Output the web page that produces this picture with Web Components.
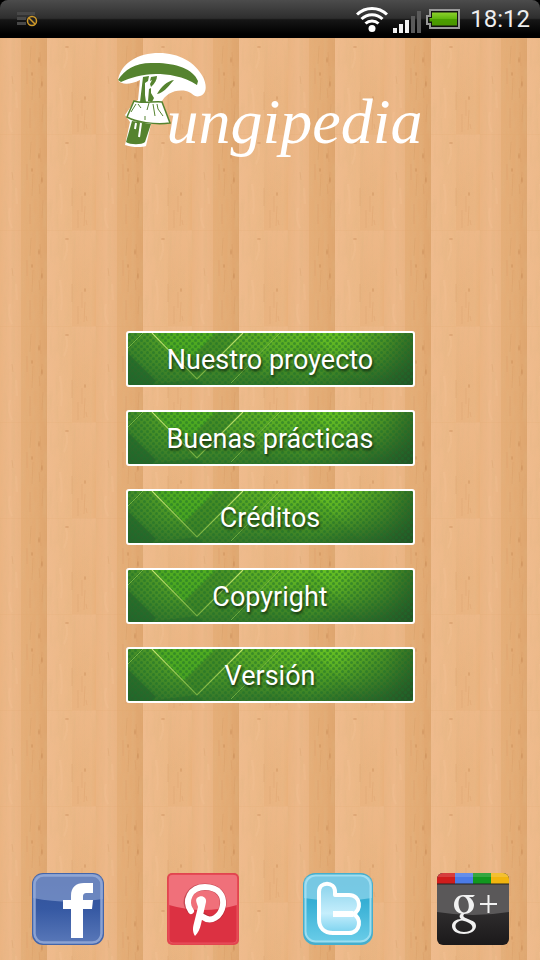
<!DOCTYPE html>
<html lang="es">
<head>
<meta charset="utf-8">
<meta name="viewport" content="width=device-width, initial-scale=1">
<title>Fungipedia</title>
<style>
	body {
		margin: 0;
		background: #000;
		font-family: Roboto, "Noto Sans", sans-serif;
		color: #fff;
	}
</style>
</head>
<body>
<fungi-app>
	<status-bar slot="status" time="18:12"></status-bar>
	<fungi-logo slot="logo">ungipedia</fungi-logo>
	<menu-button>Nuestro proyecto</menu-button>
	<menu-button>Buenas prácticas</menu-button>
	<menu-button>Créditos</menu-button>
	<menu-button>Copyright</menu-button>
	<menu-button>Versión</menu-button>
	<social-link slot="social" network="facebook" label="Facebook"></social-link>
	<social-link slot="social" network="pinterest" label="Pinterest"></social-link>
	<social-link slot="social" network="twitter" label="Twitter"></social-link>
	<social-link slot="social" network="google" label="Google Plus"></social-link>
</fungi-app>

<script>
// turn svg markup into a css background
const svgUrl = (svg) => `url("data:image/svg+xml,${encodeURIComponent(svg)}")`;

// one wood tile, repeated over the whole screen
const wood = svgUrl(`
<svg xmlns="http://www.w3.org/2000/svg" width="96" height="96">
	<defs>
		<linearGradient id="a"><stop offset="0" stop-color="#ebb482"/><stop offset=".5" stop-color="#edb889"/><stop offset="1" stop-color="#eab483"/></linearGradient>
		<linearGradient id="b"><stop offset="0" stop-color="#e5ae78"/><stop offset=".6" stop-color="#e3aa73"/><stop offset="1" stop-color="#dea56e"/></linearGradient>
		<linearGradient id="c"><stop offset="0" stop-color="#efbb8d"/><stop offset="1" stop-color="#ecb886"/></linearGradient>
		<linearGradient id="d"><stop offset="0" stop-color="#e9b380"/><stop offset=".8" stop-color="#ebb582"/><stop offset="1" stop-color="#e9b17b"/></linearGradient>
		<linearGradient id="e" x2="0" y2="1"><stop offset="0" stop-color="#edb888"/><stop offset="1" stop-color="#edb888" stop-opacity="0"/></linearGradient>
		<filter id="n" x="0" y="0" width="1" height="1">
			<feTurbulence type="fractalNoise" baseFrequency=".25 .03" numOctaves="3" seed="4" stitchTiles="stitch"/>
			<feColorMatrix values="0 0 0 0 .74  0 0 0 0 .46  0 0 0 0 .22  1.600 0 0 0 -.640"/>
		</filter>
	</defs>
	<rect width="21" height="96" fill="url(#a)"/>
	<rect x="21" width="26" height="96" fill="url(#b)"/>
	<rect x="47" width="25" height="96" fill="url(#c)"/>
	<rect x="72" width="24" height="96" fill="url(#d)"/>
	<rect x="72" width="24" height="60" fill="url(#e)"/>
	<rect width="96" height="96" filter="url(#n)" opacity=".5"/>
	<g fill="none" stroke="#c98a52" stroke-width="1" opacity=".2">
		<path d="M12 38l1 8M31 8l-1 18M33 40l-1 22M30 70v20M40 14l1 14M39 50l1 10M42 38l-1 12M43 66l-1 18M27 30v16"/>
		<path d="M72 54v18M78 76v18M82 62v16M85 72l-1 20M86 86l1 5"/>
	</g>
	<g fill="#b97a45" opacity=".3">
		<ellipse cx="39" cy="22" rx="1" ry="3"/><ellipse cx="42" cy="46" rx="1" ry="3"/><ellipse cx="32" cy="36" rx="1" ry="2"/><ellipse cx="67" cy="9" rx="2" ry="1"/><ellipse cx="85" cy="60" rx="1" ry="2"/>
	</g>
	<g fill="none" stroke="#f3c497" stroke-width="2" opacity=".25">
		<path d="M10 74q-3 10 2 20M16 54l1 16M66 10q3 10-2 20M60 50q3 18 1 30"/>
	</g>
	<path d="M0 0h96" stroke="#dda06a" opacity=".3"/>
</svg>`);

// green artwork behind each menu button
const leaf = svgUrl(`
<svg xmlns="http://www.w3.org/2000/svg" viewBox="0 0 285 52" preserveAspectRatio="none">
	<defs>
		<linearGradient id="g" x2="0" y2="1"><stop offset="0" stop-color="#5aa824"/><stop offset=".5" stop-color="#4a9426"/><stop offset="1" stop-color="#357629"/></linearGradient>
		<radialGradient id="r" cx="196" cy="-6" r="110" gradientUnits="userSpaceOnUse" gradientTransform="matrix(1 0 0 .55 0 0)"><stop offset="0" stop-color="#66c222"/><stop offset="1" stop-color="#5cad24" stop-opacity="0"/></radialGradient>
		<linearGradient id="l"><stop offset="0" stop-color="#1d5a2c" stop-opacity=".4"/><stop offset=".15" stop-color="#1d5a2c" stop-opacity="0"/><stop offset=".9" stop-color="#1d4a25" stop-opacity="0"/><stop offset="1" stop-color="#1d4a25" stop-opacity=".3"/></linearGradient>
		<linearGradient id="k" gradientUnits="userSpaceOnUse" x1="220" y1="0" x2="285" y2="52"><stop offset="0" stop-color="#1d4a25" stop-opacity="0"/><stop offset="1" stop-color="#1d4a25" stop-opacity=".7"/></linearGradient>
		<pattern id="p" width="6" height="6" patternUnits="userSpaceOnUse"><circle cx="1.500" cy="1.500" r="1.500" fill="#1a6e2b"/><circle cx="4.500" cy="4.500" r="1.500" fill="#1a6e2b"/></pattern>
		<linearGradient id="s" x2="0" y2="1"><stop offset="0" stop-color="#c4e66e"/><stop offset="1" stop-color="#8fc34a" stop-opacity=".7"/></linearGradient>
	</defs>
	<rect width="285" height="52" fill="url(#g)"/>
	<path d="M0 20L28 48 24 52H0z" fill="#1d5a2a" opacity=".5"/>
	<path d="M24 0h64L56 32z" fill="#46b41d" opacity=".45"/>
	<path d="M88 0h27L69 46 56 32z" fill="#3a7f25" opacity=".6"/>
	<path d="M69 46l6 6H20z" fill="#1d5a2a" opacity=".3"/>
	<rect width="285" height="52" fill="url(#r)"/>
	<path d="M183 0L131 52h104z" fill="#2a6c24" opacity=".15"/>
	<rect width="285" height="52" fill="url(#l)"/>
	<rect width="285" height="52" fill="url(#k)"/>
	<rect width="285" height="52" fill="url(#p)" opacity=".5"/>
	<path d="M24 0l45 46L115 0" fill="none" stroke="url(#s)" stroke-width="1.200"/>
	<path d="M152 0l-49 50M15 0L0 15" fill="none" stroke="#9bd04f" opacity=".6"/>
</svg>`);

// page skeleton: status bar on top, then logo, menu and social links
class FungiApp extends HTMLElement {
	constructor() {
		super();
		this.attachShadow({ mode: 'open' });
		this.shadowRoot.innerHTML = `
		<style>
			:host {
				display: flex;
				flex-direction: column;
				min-height: 100vh;
			}
			main {
				flex: 1;
				display: flex;
				flex-direction: column;
				justify-content: space-between;
				align-items: center;
				padding: 15px 0;
				background: ${wood};
			}
			nav {
				display: grid;
				gap: 23px;
				width: 53%;
				min-width: 289px;
			}
			footer {
				display: flex;
				justify-content: space-around;
				width: 100%;
			}
		</style>
		<slot name="status"></slot>
		<main>
			<slot name="logo"></slot>
			<nav><slot></slot></nav>
			<footer><slot name="social"></slot></footer>
		</main>
		`;
	}
}

class StatusBar extends HTMLElement {
	constructor() {
		super();
		this.attachShadow({ mode: 'open' });
		this.shadowRoot.innerHTML = `
		<style>
			:host {
				display: flex;
				align-items: center;
				box-sizing: border-box;
				height: 38px;
				padding: 0 10px 0 16px;
				border-radius: 8px 8px 0 0;
				background: linear-gradient(#4c4c4c, #2e2e2e 48%, #161616 52%, #000 90%);
			}
			svg { display: block; }
			.icons {
				display: flex;
				align-items: center;
				gap: 5px;
				margin-left: auto;
				padding-right: 10px;
			}
			time {
				font-size: 24px;
				line-height: 38px;
				color: #eee;
			}
		</style>
		<svg width="24" height="18" viewBox="0 0 24 18">
			<path d="M1 3.500h18M1 8.500h9M1 13.500h9" stroke="#484848" stroke-width="3"/>
			<circle cx="16" cy="11" r="4.500" fill="#222" stroke="#d09a28" stroke-width="1.500"/>
			<path d="M13 8l6 6" stroke="#d09a28" stroke-width="1.500"/>
		</svg>
		<div class="icons">
			<svg width="32" height="28" viewBox="0 0 32 28" fill="none" stroke="#fff" stroke-width="3">
				<path d="M1 9.500a21.500 21.500 0 0 1 30 0M5.500 14a15 15 0 0 1 21 0M9.500 18.500a9.500 9.500 0 0 1 13 0"/>
				<circle cx="16" cy="23.500" r="3.500" fill="#fff" stroke="none"/>
			</svg>
			<svg width="28" height="28" viewBox="0 0 28 28" fill="#f2f2f2">
				<path d="M0 23h4v5H0zM6 19h4v9H6zM12 15h4v13h-4z"/>
				<path d="M18 11h4v17h-4zM24 6h4v22h-4z" fill="#5a5a5a"/>
			</svg>
			<svg width="34" height="20" viewBox="0 0 34 20">
				<defs><linearGradient id="b" x2="0" y2="1"><stop offset="0" stop-color="#8bd12c"/><stop offset=".5" stop-color="#5fb40d"/><stop offset=".5" stop-color="#4a9f00"/><stop offset="1" stop-color="#4a9500"/></linearGradient></defs>
				<path d="M4 1h29v18H4v-4H1V7h3z" fill="#111" stroke="#999" stroke-width="2"/>
				<path d="M6 3.500h25v13H6v-4H3.500V9H6z" fill="url(#b)"/>
			</svg>
		</div>
		<time>${this.getAttribute('time')}</time>
		`;
	}
}

// the mushroom stands for the first letter of the name
class FungiLogo extends HTMLElement {
	constructor() {
		super();
		this.attachShadow({ mode: 'open' });
		this.shadowRoot.innerHTML = `
		<style>
			:host { display: block; }
			h1 {
				display: flex;
				margin: 0;
				height: 108px;
				font: italic 64px/64px "Liberation Serif", serif;
			}
			svg {
				flex: none;
				margin-right: -39px;
			}
			span { padding-top: 37px; }
		</style>
		<h1>
			<svg width="88" height="96" viewBox="0 0 88 96" role="img" aria-label="F">
				<path d="M0 27C3 10 20 0 41 0c20 0 36 9 44 24 4 8 4 17-3 19-6 2-8-4-14-5-11-2-21 3-25 12l9 20-19 1-5 22c-5 2-16 1-21-1l5-23-5-7 9-13 4-2 2-20C12 32 3 32 0 27z" fill="#fff"/>
				<g fill="#55832f">
					<path d="M0 27C6 17 17 10 33 10c22-1 42 5 47 18l-1 4C66 23 49 21 38 21 24 21 12 25 3 29z"/>
					<path d="M25 24l6-1-1 5-3 2v12l1 7h-6zM31 36l2-1v5l3 5-2 4-4-1zM33 24l6-1c0 4-2 7-6 11l-1-3 2-4-2 1zM56 27C49 28 43 34 39 41c6-1 10-6 17-14z"/>
					<path d="M14 68l19 3-6 18c-3 3-15 3-19 0z"/>
				</g>
				<path d="M16 48c8 3 20 0 28 1l8 21c-15 2-35-1-43-6z" fill="#fff" stroke="#55832f" stroke-width="1.500"/>
				<path d="M18 51l-5 8M20 51l3 4M31 50l-2 7M39 51l1 5 5 7M35 51l2 12M27 63v4" fill="none" stroke="#55832f"/>
				<path d="M18 70l-1 6M23 70l-2 14" stroke="#fff" stroke-width="2"/>
			</svg>
			<span><slot></slot></span>
		</h1>
		`;
	}
}

class MenuButton extends HTMLElement {
	constructor() {
		super();
		this.attachShadow({ mode: 'open' });
		this.shadowRoot.innerHTML = `
		<style>
			:host { display: block; }
			button {
				display: block;
				width: 100%;
				height: 56px;
				padding: 2px 0 0;
				border: 2px solid #fff;
				border-radius: 3px;
				background: ${leaf} padding-box center / 100% 100%;
				color: #fff;
				font: 27px/32px Roboto, "Noto Sans", sans-serif;
				text-shadow: 1px 2px 3px rgba(0, 0, 0, .7);
			}
		</style>
		<button type="button"><slot></slot></button>
		`;
	}
}

// artwork of the social icons, each on a 72px square
const networks = {
	facebook: `
		<defs><linearGradient id="f" x2="0" y2="1"><stop offset="0" stop-color="#2f4f97"/><stop offset=".5" stop-color="#3659a3"/><stop offset="1" stop-color="#5877b8"/></linearGradient></defs>
		<rect width="72" height="72" rx="11" fill="#4365aa"/>
		<rect x="2.500" y="2.500" width="67" height="67" rx="9" fill="url(#f)" stroke="#8ba2d2" stroke-width="2.500"/>
		<path d="M1 25V12Q1 1 12 1h48q11 0 11 11v14Q36 32 1 25z" fill="#91a7d6" opacity=".6"/>
		<path d="M39 65V36h-8v-9h8v-4c0-9 5-13 13-13h9v10h-6c-3 0-4 1-4 4v3h10l-1 9h-9v29z" fill="#fff"/>`,
	pinterest: `
		<rect width="72" height="72" rx="5" fill="#e2454f"/>
		<rect x="2" y="2" width="68" height="68" rx="4" fill="#dc3142" stroke="#e8525e"/>
		<path d="M2 32V5q0-3 3-3h62q3 0 3 3v27Q36 42 2 32z" fill="#f0707a"/>
		<g fill="none" stroke-linecap="round">
			<path d="M23 37c-7-10 0-23 15-23 14 0 19 9 18 18-2 13-12 18-20 11" stroke="#9d2630" stroke-width="7" opacity=".5"/>
			<path d="M24 38c-7-10-1-24 14-24 14 0 19 9 18 18-2 12-12 18-20 12" stroke="#fff" stroke-width="6"/>
		</g>
		<path d="M30 25c4-4 10-1 9 4l-5 22c-1 5-3 9-6 12-3-5-2-9-1-13l4-16c-1-4-3-7-1-9z" fill="#fff"/>`,
	twitter: `
		<defs>
			<linearGradient id="t" x2="0" y2="1"><stop offset="0" stop-color="#36a6cb"/><stop offset=".4" stop-color="#36afd4"/><stop offset="1" stop-color="#69cce8"/></linearGradient>
			<linearGradient id="u" x2="0" y2="1"><stop offset="0" stop-color="#8bd3ec"/><stop offset=".6" stop-color="#c5eefc"/><stop offset="1" stop-color="#7bd2ef"/></linearGradient>
		</defs>
		<rect x="1" width="70" height="72" rx="12" fill="#46aecd"/>
		<rect x="3.500" y="2.500" width="65" height="66" rx="10" fill="url(#t)" stroke="#9cdef0" stroke-width="2"/>
		<path d="M2 25V12Q2 2 12 2h48q10 0 10 10v13Q36 31 2 25z" fill="#a4def1" opacity=".6"/>
		<path d="M17 19c0-11 16-11 16 0v3h14c12 0 13 16 4 19 9 3 8 19-4 19H31c-9 0-14-5-14-14z" fill="url(#u)" stroke="#fff" stroke-width="4" stroke-linejoin="round"/>
		<path d="M31 38h20v6H31z" fill="#fff"/>`,
	google: `
		<defs>
			<clipPath id="c"><rect width="72" height="72" rx="6"/></clipPath>
			<linearGradient id="k" x2="0" y2="1"><stop offset="0" stop-color="#353334"/><stop offset=".6" stop-color="#2c2a2b"/><stop offset="1" stop-color="#1b191a"/></linearGradient>
		</defs>
		<g clip-path="url(#c)">
			<rect width="72" height="72" fill="url(#k)"/>
			<path d="M0 0h72v39Q36 45 0 39z" fill="#5a5859"/>
			<path d="M0 0h18v11H0z" fill="#cf1d1c"/><path d="M18 0h18v11H18z" fill="#4b7be6"/><path d="M36 0h18v11H36z" fill="#12971f"/><path d="M54 0h18v11H54z" fill="#f2b50e"/>
			<path d="M0 0h72v4H0z" fill="#fff" opacity=".15"/>
			<path d="M0 11h72" stroke="#262425"/>
		</g>
		<g fill="#f1f1f1">
			<path fill-rule="evenodd" d="M26 22h12l-2 2h-4c4 3 5 6 5 8 0 6-5 9-10 9-6 0-10-4-10-9 0-6 4-10 9-10zM26 23.500c-7 0-5 16 1 16 8 0 5-16-1-16z"/>
			<path fill-rule="evenodd" d="M25 40h3c-3 3-2 4 3 6 5 2 8 3 8 7 0 5-6 8-12 8-7 0-12-3-12-8 0-4 4-7 9-7-2-2-2-4 1-6zM25 47.500c-9 1-9 11 2 11.500 9 0 11-6 5-9-2-1-4-2-7-2.500z"/>
			<path d="M50.500 22h2v8H60v2h-7.500v8h-2v-8H43v-2h7.500z"/>
		</g>`
};

class SocialLink extends HTMLElement {
	constructor() {
		super();
		this.attachShadow({ mode: 'open' });
		this.shadowRoot.innerHTML = `
		<style>
			:host { display: block; }
			a, svg { display: block; }
		</style>
		<a href="#${this.getAttribute('network')}" aria-label="${this.getAttribute('label')}">
			<svg width="72" height="72" viewBox="0 0 72 72">${networks[this.getAttribute('network')]}</svg>
		</a>
		`;
	}
}

// register the elements
customElements.define('fungi-app', FungiApp);
customElements.define('status-bar', StatusBar);
customElements.define('fungi-logo', FungiLogo);
customElements.define('menu-button', MenuButton);
customElements.define('social-link', SocialLink);
</script>
</body>
</html>
